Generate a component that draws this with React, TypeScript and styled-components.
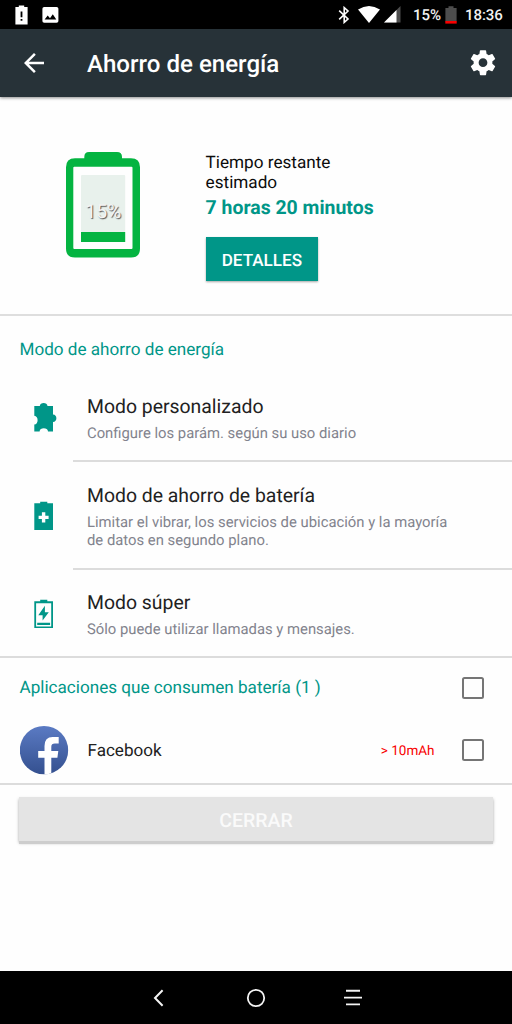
import React from "react";
import styled, { createGlobalStyle } from "styled-components";

const TEAL = "#009688";

const GlobalStyle = createGlobalStyle`
  body { margin: 0; background: #fefefe; }
  * { box-sizing: border-box; }
  svg { display: block; flex: none; }
`;

const Screen = styled.div`
  width: 512px;
  height: 1024px;
  display: flex;
  flex-direction: column;
  overflow: hidden;
  background: #fefefe;
  font-family: Roboto, "Liberation Sans", sans-serif;
  text-rendering: geometricPrecision;
  color: #212121;
`;

const StatusBar = styled.div`
  height: 29px;
  flex: none;
  display: flex;
  align-items: center;
  background: #000;
  color: #fff;
`;

const StatusGroup = styled.div<{ $end?: boolean }>`
  display: flex;
  align-items: center;
  margin-left: ${(p) => (p.$end ? "auto" : "15px")};
  padding-right: ${(p) => (p.$end ? "9px" : "0")};
`;

const StatusText = styled.span<{ $before: number; $width: number }>`
  font-size: 15px;
  line-height: 29px;
  padding-top: 1px;
  font-weight: 500;
  letter-spacing: -0.05px;
  color: #f2f2f2;
  width: ${(p) => p.$width}px;
  margin-left: ${(p) => p.$before}px;
  white-space: nowrap;
`;

const AppBar = styled.header`
  height: 67.5px;
  flex: none;
  display: flex;
  align-items: center;
  padding: 0 14px 0 19px;
  background: #273238;
  box-shadow: 0 1px 3px rgba(0, 0, 0, 0.45);
  color: #fff;
`;

const AppTitle = styled.h1`
  flex: 1;
  margin: 2px 0 0 38px;
  font-size: 24.1px;
  line-height: 30px;
  font-weight: 500;
`;

const Summary = styled.section`
  height: 219.5px;
  flex: none;
  display: flex;
  align-items: flex-start;
  padding: 55.5px 0 0 66px;
  border-bottom: 2px solid #dedede;
`;

const BatteryLabel = styled.text`
  font-family: Roboto, sans-serif;
  font-size: 19.4px;
  fill: #f4f4f4;
  text-shadow: 1px 1px 1px #555;
`;

const SummaryInfo = styled.div`
  margin-left: 65.6px;
  padding-top: 1px;
  display: flex;
  flex-direction: column;
  align-items: flex-start;
`;

const SummaryCaption = styled.p`
  margin: 0;
  width: 150px;
  font-size: 17.15px;
  line-height: 20px;
  color: #0c0c0c;
`;

const SummaryTime = styled.strong`
  margin-top: 3px;
  font-size: 19.45px;
  line-height: 24px;
  font-weight: 700;
  color: ${TEAL};
`;

const DetailsButton = styled.button`
  margin-top: 17px;
  width: 112.5px;
  height: 44px;
  padding: 3px 0 0;
  border: 0;
  background: ${TEAL};
  color: #fff;
  font: 500 17.07px/20px Roboto, sans-serif;
  text-rendering: inherit;
  box-shadow: 0 1px 2px rgba(0, 0, 0, 0.35);
`;

const SectionTitle = styled.h2`
  margin: 0;
  padding-top: 1px;
  font-size: 17.12px;
  line-height: 20px;
  font-weight: 400;
  color: ${TEAL};
`;

const Modes = styled.section`
  height: 342px;
  flex: none;
  border-bottom: 2px solid #dcdcdc;
  padding-top: 23px;

  ${SectionTitle} {
    margin-left: 19.5px;
  }
`;

const ModeRow = styled.div<{ $height: number; $top: number }>`
  height: ${(p) => p.$height}px;
  display: flex;
  align-items: flex-start;
  padding: ${(p) => p.$top}px 0 0 33px;
`;

const ModeIcon = styled.div<{ $top: number }>`
  width: 54px;
  flex: none;
  padding-top: ${(p) => p.$top}px;
`;

const ModeTitle = styled.h3`
  margin: 0;
  font-size: 19.4px;
  line-height: 24px;
  font-weight: 400;
  color: #212121;
`;

const ModeText = styled.p`
  margin: 6px 0 0;
  width: 380px;
  font-size: 14.83px;
  line-height: 17.7px;
  color: #82838d;
`;

const Separator = styled.div`
  height: 2px;
  margin-left: 73px;
  background: #dcdcdc;
`;

const Apps = styled.section`
  height: 127px;
  flex: none;
  border-bottom: 2px solid #dcdcdc;
`;

const AppsRow = styled.div<{ $height: number }>`
  height: ${(p) => p.$height}px;
  display: flex;
  align-items: center;
  padding: 0 28px 0 19.5px;
`;

const AppName = styled.span`
  margin-left: 19px;
  font-size: 17.07px;
  line-height: 20px;
  padding-top: 2px;
`;

const Usage = styled.span`
  margin: 0 27.5px 0 auto;
  padding-top: 2px;
  font-size: 13.5px;
  line-height: 20px;
  color: #f80000;
`;

const Checkbox = styled.span<{ $push?: boolean }>`
  width: 22px;
  height: 22px;
  flex: none;
  margin-left: ${(p) => (p.$push ? "auto" : "0")};
  border: 2px solid #757575;
  border-radius: 2.5px;
`;

const CloseButton = styled.button`
  flex: none;
  height: 44px;
  margin: 12px 19px 0;
  padding: 3px 0 0;
  border: 0;
  background: #e4e4e4;
  color: #fafafa;
  font: 500 19.5px/24px Roboto, sans-serif;
  text-rendering: inherit;
  box-shadow: 0 3px 0 #cdcdcd, 0 2px 3px rgba(0, 0, 0, 0.35);
`;

const NavBar = styled.nav`
  height: 53px;
  flex: none;
  margin-top: auto;
  display: flex;
  align-items: center;
  justify-content: center;
  gap: 78px;
  background: #000;
`;

const modes = [
  {
    title: "Modo personalizado",
    text: "Configure los parám. según su uso diario",
    height: 100,
    top: 35,
    iconTop: 5,
    icon: (
      <svg width="24" height="32" viewBox="0 0 24 32" fill={TEAL}>
        <path d="M1.3 6H6.8C6.8 2 14.5 2 14.5 6H20V14.5C24.5 14.5 24.5 22 20 22V31.5H15C15 27.2 6.6 27.2 6.6 31.5H1.3V24.6C5.7 24.6 5.7 15.8 1.3 15.8Z" />
      </svg>
    ),
  },
  {
    title: "Modo de ahorro de batería",
    text: "Limitar el vibrar, los servicios de ubicación y la mayoría de datos en segundo plano.",
    height: 106,
    top: 22,
    iconTop: 17,
    icon: (
      <svg width="22" height="30" viewBox="0 0 22 30" fill={TEAL}>
        <path d="M7.2 .8H14.3V2.2H20V29H1.3V2.2H7.2Z" />
        <path d="M8.9 11.3h3.4v3.4h3.3V18h-3.3v3.4H8.9V18H5.6v-3.3h3.3Z" fill="#fff" />
      </svg>
    ),
  },
  {
    title: "Modo súper",
    text: "Sólo puede utilizar llamadas y mensajes.",
    height: 86,
    top: 21,
    iconTop: 8,
    icon: (
      <svg width="22" height="30" viewBox="0 0 22 30" fill={TEAL}>
        <path d="M7.2 .8H14.3V2.3H20V29H1.3V2.3H7.2ZM3.1 4.2V27.4H18.2V4.2Z" fillRule="evenodd" />
        <path d="M11.9 6.8V13.3H15.8L9.6 21.5V16.3H5.3ZM4.2 23.8H17.1V26.1H4.2Z" />
      </svg>
    ),
  },
];

function BatteryGauge() {
  return (
    <svg width="74" height="106" viewBox="0 0 74 106">
      <path
        d="M23 0H51Q56 0 56 5V6.3H65Q74 6.3 74 15.3V96.5Q74 105.5 65 105.5H9Q0 105.5 0 96.5V15.3Q0 6.3 9 6.3H18.3V5Q18.3 0 23 0Z"
        fill="#04b441"
      />
      <rect x="7.3" y="14.7" width="59.2" height="82.3" rx="1" fill="#fefefe" />
      <rect x="15" y="23" width="44.2" height="57" rx="1" fill="#e8f1ec" />
      <rect x="15" y="80" width="44.2" height="10" fill="#04b441" />
      <BatteryLabel x="37.3" y="65.5" textAnchor="middle">15%</BatteryLabel>
    </svg>
  );
}

function FacebookLogo() {
  return (
    <svg width="49" height="49" viewBox="0.5 0.5 49 49">
      <defs>
        <linearGradient id="fb" x1="0" y1="0" x2="0" y2="1">
          <stop offset="0" stopColor="#5b7bc4" />
          <stop offset="1" stopColor="#34508f" />
        </linearGradient>
        <clipPath id="disc">
          <circle cx="24.5" cy="24.7" r="24.2" />
        </clipPath>
      </defs>
      <g clipPath="url(#disc)">
        <rect width="49" height="49" fill="url(#fb)" />
        <path
          d="M25 49V32.3H18.7V25.5H25V20.5Q25 11.5 33.2 11.5H39.2V18H35.3Q31.8 18 31.8 21.3V25.5H38.8L37.9 32.3H31.8V49Z"
          fill="#fff"
        />
      </g>
    </svg>
  );
}

export default function App() {
  return (
    <Screen>
      <GlobalStyle />
      <StatusBar>
        <StatusGroup>
          <svg width="13" height="20" viewBox="0 0 13 20">
            <path d="M3.8 .5H9.2V2H12.6V19.5H.4V2H3.8Z" fill="#fff" />
            <path d="M5.6 6.5H7.4V12.2H5.6ZM5.6 14H7.4V15.8H5.6Z" fill="#000" />
          </svg>
          <svg width="17" height="16" viewBox="0 0 17 16" style={{ marginLeft: 14 }}>
            <rect x=".4" width="16" height="15.7" rx="1.8" fill="#fff" />
            <path d="M2.6 12.6 5.7 8.6 8 11.2 10.8 7.2 14.3 12.6Z" fill="#000" />
          </svg>
        </StatusGroup>
        <StatusGroup $end>
          <svg width="12" height="18" viewBox="0 0 12 18" fill="none" stroke="#fff" strokeWidth="1.6">
            <path d="M1.2 4.6 10 13 6.2 16.4V1.6L10 5 1.2 13.4" />
          </svg>
          <svg width="22" height="17" viewBox="0 0 22 17" fill="#fff" style={{ marginLeft: 8 }}>
            <path d="M0 3.6Q11 -3.6 22 3.6L11 17Z" />
          </svg>
          <svg width="17" height="17" viewBox="0 0 17 17" style={{ marginLeft: 4 }}>
            <path d="M0 16.5 16.5 0V16.5Z" fill="#4d4d4d" />
            <path d="M0 16.5 12.5 4V16.5Z" fill="#fff" />
          </svg>
          <StatusText $before={12} $width={28}>15%</StatusText>
          <svg width="12" height="18" viewBox="0 0 12 18" style={{ marginLeft: 4 }}>
            <path d="M3.5 .3H8.5V2H11.6V15.5H.4V2H3.5Z" fill="#4d4d4d" />
            <rect x=".3" y="15" width="11.4" height="2.6" fill="#f80000" />
          </svg>
          <StatusText $before={8} $width={38}>18:36</StatusText>
        </StatusGroup>
      </StatusBar>
      <AppBar>
        <svg width="30" height="30" viewBox="0 0 24 24" fill="#fff">
          <path d="M20 11H7.83l5.59-5.59L12 4l-8 8 8 8 1.41-1.41L7.83 13H20v-2z" />
        </svg>
        <AppTitle>Ahorro de energía</AppTitle>
        <svg width="30" height="30" viewBox="0 0.3 24 24" fill="#fff">
          <path d="M19.43 12.98c.04-.32.07-.64.07-.98s-.03-.66-.07-.98l2.11-1.65c.19-.15.24-.42.12-.64l-2-3.46c-.12-.22-.39-.3-.61-.22l-2.49 1c-.52-.4-1.08-.73-1.69-.98l-.38-2.65C14.46 2.18 14.25 2 14 2h-4c-.25 0-.46.18-.49.42l-.38 2.65c-.61.25-1.17.59-1.69.98l-2.49-1c-.23-.09-.49 0-.61.22l-2 3.46c-.13.22-.07.49.12.64l2.11 1.65c-.04.32-.07.65-.07.98s.03.66.07.98l-2.11 1.65c-.19.15-.24.42-.12.64l2 3.46c.12.22.39.3.61.22l2.49-1c.52.4 1.08.73 1.69.98l.38 2.65c.03.24.24.42.49.42h4c.25 0 .46-.18.49-.42l.38-2.65c.61-.25 1.17-.59 1.69-.98l2.49 1c.23.09.49 0 .61-.22l2-3.46c.12-.22.07-.49-.12-.64l-2.11-1.65zM12 15.5c-1.93 0-3.5-1.57-3.5-3.5s1.57-3.5 3.5-3.5 3.5 1.57 3.5 3.5-1.57 3.5-3.5 3.5z" />
        </svg>
      </AppBar>
      <Summary>
        <BatteryGauge />
        <SummaryInfo>
          <SummaryCaption>Tiempo restante estimado</SummaryCaption>
          <SummaryTime>7 horas 20 minutos</SummaryTime>
          <DetailsButton>DETALLES</DetailsButton>
        </SummaryInfo>
      </Summary>
      <Modes>
        <SectionTitle>Modo de ahorro de energía</SectionTitle>
        {modes.map((m, i) => (
          <React.Fragment key={m.title}>
            {i > 0 && <Separator />}
            <ModeRow $height={m.height} $top={m.top}>
              <ModeIcon $top={m.iconTop}>{m.icon}</ModeIcon>
              <div>
                <ModeTitle>{m.title}</ModeTitle>
                <ModeText>{m.text}</ModeText>
              </div>
            </ModeRow>
          </React.Fragment>
        ))}
      </Modes>
      <Apps>
        <AppsRow $height={59}>
          <SectionTitle>Aplicaciones que consumen batería (1 )</SectionTitle>
          <Checkbox $push />
        </AppsRow>
        <AppsRow $height={66}>
          <FacebookLogo />
          <AppName>Facebook</AppName>
          <Usage>&gt; 10mAh</Usage>
          <Checkbox />
        </AppsRow>
      </Apps>
      <CloseButton>CERRAR</CloseButton>
      <NavBar>
        <svg width="18" height="18" viewBox="0 0 18 18" fill="none" stroke="#f4f4f4" strokeWidth="2">
          <path d="M12.6 1.2 5 9 12.6 16.8" />
        </svg>
        <svg width="20" height="20" viewBox="0 0 20 20" fill="none" stroke="#f4f4f4" strokeWidth="1.8">
          <circle cx="10" cy="10" r="8.2" />
        </svg>
        <svg width="18" height="18" viewBox="0 0 18 18" fill="none" stroke="#f4f4f4" strokeWidth="1.9">
          <path d="M2 1.8H16M0 8.6H18M2 15.4H16" />
        </svg>
      </NavBar>
    </Screen>
  );
}
